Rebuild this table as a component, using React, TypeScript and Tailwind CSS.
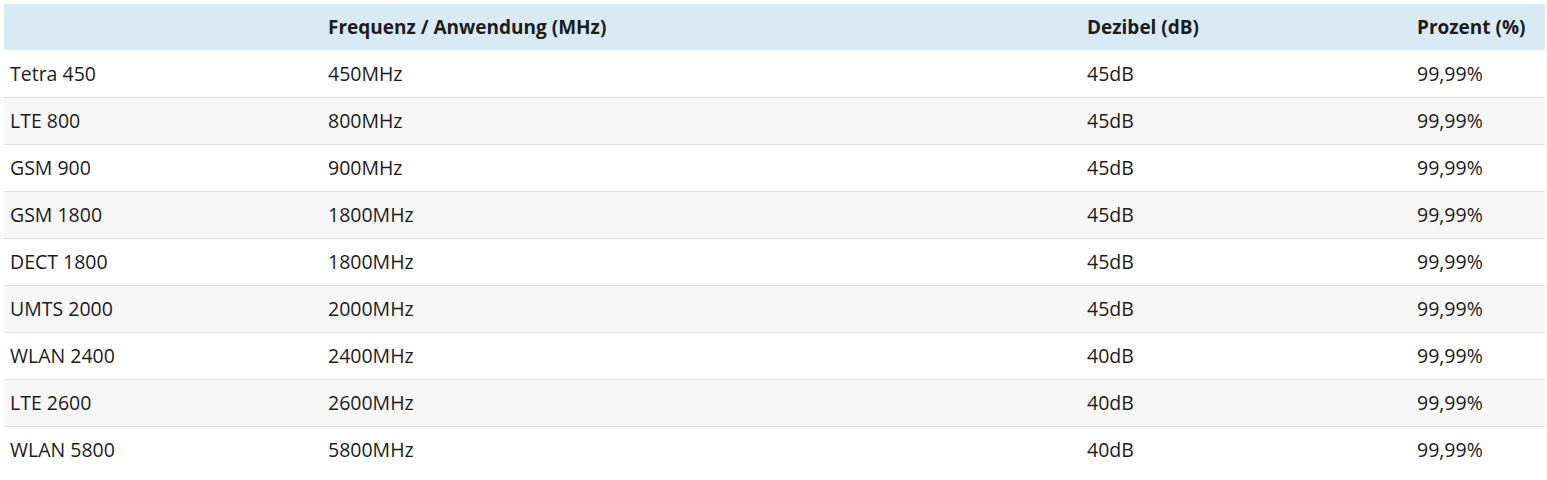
const rows: [string, string, string, string][] = [
  ['Tetra 450', '450MHz', '45dB', '99,99%'],
  ['LTE 800', '800MHz', '45dB', '99,99%'],
  ['GSM 900', '900MHz', '45dB', '99,99%'],
  ['GSM 1800', '1800MHz', '45dB', '99,99%'],
  ['DECT 1800', '1800MHz', '45dB', '99,99%'],
  ['UMTS 2000', '2000MHz', '45dB', '99,99%'],
  ['WLAN 2400', '2400MHz', '40dB', '99,99%'],
  ['LTE 2600', '2600MHz', '40dB', '99,99%'],
  ['WLAN 5800', '5800MHz', '40dB', '99,99%'],
];

export default function App() {
  return (
    <div className="min-h-[480px] bg-white pt-1 pl-1 pr-[2px] font-['Open_Sans',sans-serif] text-[19.5px] text-[#1c1c1c]">
      <table className="w-full table-fixed border-collapse">
        <colgroup>
          <col className="w-[318px]" />
          <col className="w-[759px]" />
          <col className="w-[330px]" />
          <col />
        </colgroup>
        <thead>
          <tr className="h-[46px] bg-[#d9eaf4] text-left text-[19px]">
            <th className="px-[6px]" />
            <th className="px-[6px] font-bold">Frequenz / Anwendung (MHz)</th>
            <th className="px-[6px] font-bold">Dezibel (dB)</th>
            <th className="px-[6px] font-bold">Prozent (%)</th>
          </tr>
        </thead>
        <tbody>
          {rows.map((r, i) => (
            <tr
              key={r[0]}
              className={`h-[47px] ${i > 0 ? 'border-t border-[#dedede]' : ''} ${i % 2 === 1 ? 'bg-[#f7f7f7]' : 'bg-white'}`}
            >
              {r.map((c, j) => (
                <td key={j} className="px-[6px]">
                  {c}
                </td>
              ))}
            </tr>
          ))}
        </tbody>
      </table>
    </div>
  );
}
